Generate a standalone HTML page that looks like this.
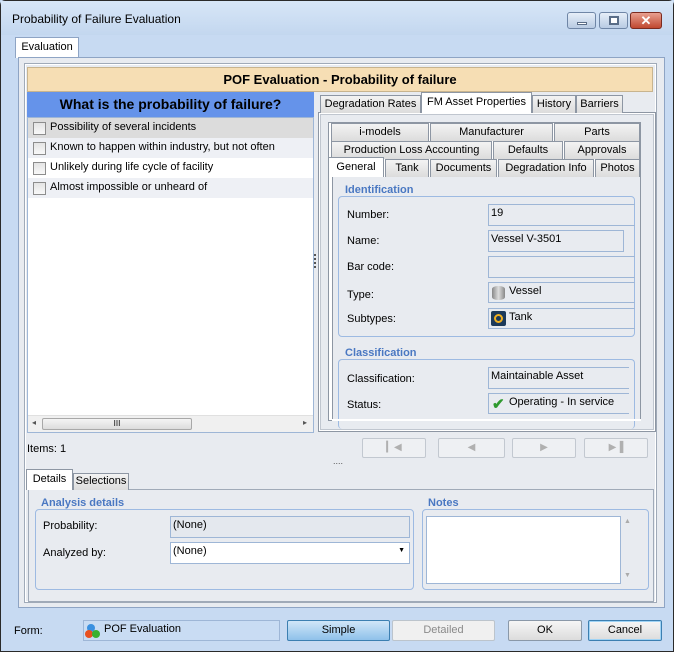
<!DOCTYPE html>
<html><head><style>
*{margin:0;padding:0;box-sizing:border-box}
body{width:674px;height:652px;overflow:hidden;font-family:"Liberation Sans",sans-serif;font-size:11px;color:#000;background:#c7daf2;position:relative}
.a{position:absolute}
.tab{position:absolute;border:1px solid #8d96a3;border-bottom:none;background:linear-gradient(#f3f3f3,#dcdcdc);text-align:center;line-height:17px;font-size:11px}
.sel{background:#fff;line-height:19px}
.lbl{position:absolute;font-size:11px}
.box{position:absolute;border:1px solid #9eb6d6;padding:2px 2px;font-size:11px}
.grp{position:absolute;border:1px solid #9dbae2;border-radius:4px}
.gt{position:absolute;color:#4a78c2;font-weight:bold;font-size:11px;background:#e8ebf0;padding:0 3px}
.btn{position:absolute;border:1px solid #8a98a8;border-radius:2px;background:linear-gradient(#f6f6f6,#dcdcdc);text-align:center;line-height:19px;font-size:11px}
.nb{position:absolute;border:1px solid #c2c8d0;border-radius:2px;background:#eef0f3;top:438px;height:20px;width:64px;color:#b0b0b0;text-align:center;line-height:18px;font-size:10px}
.cb{position:absolute;left:5px;width:13px;height:13px;border:1px solid #8d8d8d;background:linear-gradient(#e4e4e4,#f8f8f8)}
.row{position:absolute;left:0;width:285px;height:20px;line-height:18px;padding-left:22px}
</style></head><body>
<div class="a" style="left:0;top:0;width:674px;height:652px;border:1px solid #2a2a2a;border-radius:5px 5px 0 0"></div>
<div class="a" style="left:1px;top:1px;width:672px;height:34px;background:linear-gradient(#d7e6f7,#c3d7ef)"></div>
<div class="a" style="left:12px;top:12px;font-size:12px">Probability of Failure Evaluation</div>
<div class="a" style="left:567px;top:12px;width:29px;height:17px;border:1px solid #6f86a6;border-radius:3px;background:linear-gradient(#e6eef8,#b8cbe3)"><div class="a" style="left:9px;top:9px;width:10px;height:3px;background:#fff;border:1px solid #5a6d87"></div></div>
<div class="a" style="left:599px;top:12px;width:29px;height:17px;border:1px solid #6f86a6;border-radius:3px;background:linear-gradient(#e6eef8,#b8cbe3)"><div class="a" style="left:9px;top:3px;width:10px;height:9px;border:2px solid #5a6d87;background:#fff"></div></div>
<div class="a" style="left:630px;top:12px;width:32px;height:17px;border:1px solid #7b2b20;border-radius:3px;background:linear-gradient(#e8a090,#c04830);color:#fff;font-weight:bold;text-align:center;line-height:15px;font-size:13px">✕</div>

<div class="tab sel" style="left:15px;top:37px;width:64px;height:21px;border-color:#8ea4c4">Evaluation</div>
<div class="a" style="left:18px;top:57px;width:647px;height:551px;background:#e8ebf0;border:1px solid #8ea4c4"></div>
<div class="a" style="left:25px;top:64px;width:631px;height:538px;border:1px solid #fff;outline:1px solid #a0aab8"></div>

<div class="a" style="left:27px;top:67px;width:626px;height:25px;background:#f6deb4;border:1px solid #c8b48e;text-align:center;font-weight:bold;font-size:13px;line-height:23px">POF Evaluation - Probability of failure</div>
<div class="a" style="left:27px;top:92px;width:287px;height:25px;background:#6593ea;text-align:center;font-weight:bold;font-size:14px;line-height:25px">What is the probability of failure?</div>
<div class="a" style="left:27px;top:117px;width:287px;height:316px;background:#fff;border:1px solid #9eb6d6;overflow:hidden">
<div class="row" style="top:0;background:#dcdcdc"><div class="cb" style="top:4px"></div>Possibility of several incidents</div>
<div class="row" style="top:20px;background:#eef0f5"><div class="cb" style="top:4px"></div>Known to happen within industry, but not often</div>
<div class="row" style="top:40px;background:#fff"><div class="cb" style="top:4px"></div>Unlikely during life cycle of facility</div>
<div class="row" style="top:60px;background:#eef0f5"><div class="cb" style="top:4px"></div>Almost impossible or unheard of</div>
<div class="a" style="left:0;top:297px;width:285px;height:17px;background:#f0f0f0;border-top:1px solid #e0e0e0"><div class="a" style="left:14px;top:2px;width:150px;height:12px;border:1px solid #a8a8a8;border-radius:2px;background:linear-gradient(#f4f4f4,#dcdcdc);text-align:center;font-size:8px;line-height:10px">III</div><div class="a" style="left:4px;top:2px;font-size:8px;color:#555">◂</div><div class="a" style="left:275px;top:2px;font-size:8px;color:#555">▸</div></div>
</div>
<div class="a" style="left:314px;top:254px;width:2px;height:14px;border-left:2px dotted #555"></div>

<div class="a" style="left:318px;top:112px;width:338px;height:320px;border:1px solid #8d96a3;background:#fff"></div>
<div class="a" style="left:320px;top:114px;width:334px;height:316px;background:#e8ebf0;border:1px solid #c0c6cf"></div>
<div class="tab" style="left:320px;top:95px;width:101px;height:18px">Degradation Rates</div>
<div class="tab sel" style="left:421px;top:92px;width:111px;height:21px">FM Asset Properties</div>
<div class="tab" style="left:532px;top:95px;width:44px;height:18px">History</div>
<div class="tab" style="left:576px;top:95px;width:47px;height:18px">Barriers</div>
<div class="a" style="left:328px;top:122px;width:313px;height:299px;border:1px solid #8d96a3;background:#fff"></div>
<div class="tab" style="left:331px;top:123px;width:98px;height:18px">i-models</div>
<div class="tab" style="left:430px;top:123px;width:123px;height:18px">Manufacturer</div>
<div class="tab" style="left:554px;top:123px;width:86px;height:18px">Parts</div>
<div class="tab" style="left:331px;top:141px;width:161px;height:18px">Production Loss Accounting</div>
<div class="tab" style="left:493px;top:141px;width:70px;height:18px">Defaults</div>
<div class="tab" style="left:564px;top:141px;width:76px;height:18px">Approvals</div>
<div class="tab sel" style="left:328px;top:157px;width:56px;height:21px;border-bottom:none">General</div>
<div class="tab" style="left:385px;top:159px;width:44px;height:18px">Tank</div>
<div class="tab" style="left:430px;top:159px;width:67px;height:18px">Documents</div>
<div class="tab" style="left:498px;top:159px;width:96px;height:18px">Degradation Info</div>
<div class="tab" style="left:595px;top:159px;width:45px;height:18px">Photos</div>
<div class="a" style="left:332px;top:177px;width:309px;height:243px;background:#e8ebf0;border:1px solid #8d96a3;border-top:none"></div>
<div class="grp" style="left:338px;top:196px;width:297px;height:141px"></div>
<div class="gt" style="left:342px;top:184px">Identification</div>
<div class="lbl" style="left:347px;top:209px">Number:</div>
<div class="box" style="left:488px;top:204px;width:147px;height:22px;border-right:none">19</div>
<div class="lbl" style="left:347px;top:235px">Name:</div>
<div class="box" style="left:488px;top:230px;width:136px;height:22px">Vessel V-3501</div>
<div class="lbl" style="left:347px;top:261px">Bar code:</div>
<div class="box" style="left:488px;top:256px;width:147px;height:22px;border-right:none"></div>
<div class="lbl" style="left:347px;top:289px">Type:</div>
<div class="box" style="left:488px;top:282px;width:147px;height:21px;border-right:none;padding-left:20px"><div class="a" style="left:3px;top:3px;width:13px;height:14px;border-radius:6px/3px;background:linear-gradient(90deg,#888,#ddd,#888)"></div>Vessel</div>
<div class="lbl" style="left:347px;top:313px">Subtypes:</div>
<div class="box" style="left:488px;top:308px;width:147px;height:21px;border-right:none;padding-left:20px"><div class="a" style="left:2px;top:2px;width:15px;height:15px;background:#1c3a5a;border-radius:2px"><div class="a" style="left:3px;top:3px;width:9px;height:9px;border:2px solid #f0b020;border-radius:50%"></div></div>Tank</div>
<div class="grp" style="left:338px;top:359px;width:297px;height:70px;border-bottom:none"></div>
<div class="gt" style="left:342px;top:347px">Classification</div>
<div class="lbl" style="left:347px;top:373px">Classification:</div>
<div class="box" style="left:488px;top:367px;width:141px;height:22px;border-right:none">Maintainable Asset</div>
<div class="lbl" style="left:347px;top:399px">Status:</div>
<div class="box" style="left:488px;top:393px;width:141px;height:21px;border-right:none;padding-left:20px"><span class="a" style="left:3px;top:1px;color:#2f9a2f;font-size:15px;font-weight:bold">✔</span>Operating - In service</div>
<div class="a" style="left:332px;top:419px;width:309px;height:2px;background:#fff"></div>

<div class="lbl" style="left:27px;top:443px">Items: 1</div>
<div class="nb" style="left:362px">&#9614;◀</div>
<div class="nb" style="left:438px;width:67px">◀</div>
<div class="nb" style="left:512px">▶</div>
<div class="nb" style="left:584px">▶&#9616;</div>
<div class="a" style="left:333px;top:456px;font-size:9px;color:#555">....</div>

<div class="a" style="left:28px;top:489px;width:626px;height:113px;border:1px solid #a0aab8;background:#e8ebf0"></div>
<div class="tab sel" style="left:26px;top:469px;width:47px;height:21px">Details</div>
<div class="tab" style="left:73px;top:473px;width:56px;height:17px;line-height:15px">Selections</div>
<div class="grp" style="left:35px;top:509px;width:379px;height:81px"></div>
<div class="gt" style="left:38px;top:497px">Analysis details</div>
<div class="lbl" style="left:43px;top:520px">Probability:</div>
<div class="box" style="left:170px;top:516px;width:240px;height:22px;background:#e4e8ee">(None)</div>
<div class="lbl" style="left:43px;top:547px">Analyzed by:</div>
<div class="box" style="left:170px;top:542px;width:240px;height:22px;background:#fff">(None)<span class="a" style="right:4px;top:4px;font-size:7px">▼</span></div>
<div class="grp" style="left:422px;top:509px;width:227px;height:81px"></div>
<div class="gt" style="left:425px;top:497px">Notes</div>
<div class="a" style="left:426px;top:516px;width:195px;height:68px;background:#fff;border:1px solid #9eb6d6"></div>
<div class="a" style="left:624px;top:518px;font-size:7px;color:#aaa">▲</div>
<div class="a" style="left:624px;top:572px;font-size:7px;color:#aaa">▼</div>

<div class="lbl" style="left:14px;top:625px;font-size:11px">Form:</div>
<div class="box" style="left:83px;top:620px;width:197px;height:21px;background:#c9dcf3;padding-left:20px;line-height:15px;padding-top:1px"><div class="a" style="left:3px;top:3px;width:8px;height:8px;border-radius:50%;background:#3a90e0"></div><div class="a" style="left:1px;top:9px;width:8px;height:8px;border-radius:50%;background:#e85020"></div><div class="a" style="left:8px;top:9px;width:8px;height:8px;border-radius:50%;background:#3ab030"></div>POF Evaluation</div>
<div class="btn" style="left:287px;top:620px;width:103px;height:21px;background:linear-gradient(#d0e6f8,#8fc1ea);border-color:#3c7fb1">Simple</div>
<div class="btn" style="left:392px;top:620px;width:103px;height:21px;background:#f0f0f0;border-color:#bcc4cc;color:#8a8a8a">Detailed</div>
<div class="btn" style="left:508px;top:620px;width:74px;height:21px">OK</div>
<div class="btn" style="left:588px;top:620px;width:74px;height:21px;border-color:#3c7fb1;box-shadow:inset 0 0 0 1px #9fd3f5">Cancel</div>
</body></html>
